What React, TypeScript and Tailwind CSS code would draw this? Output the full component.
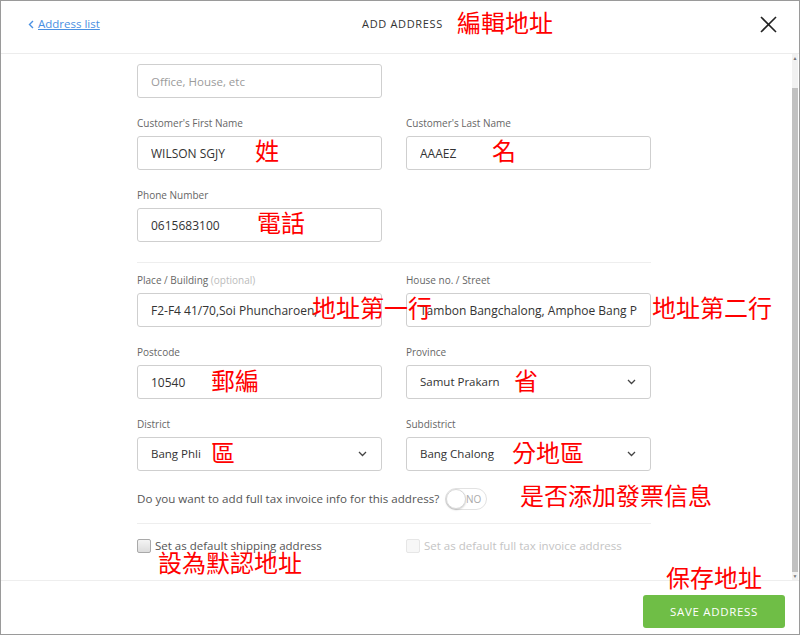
import React from 'react';

const cjk = { fontFamily: '"Noto Sans CJK TC", "Noto Sans CJK SC", sans-serif' };

function Note({ text, x, y }: { text: string; x: number; y: number }) {
  // red annotations drawn over the screenshot
  return (
    <span
      className="absolute text-[24px] leading-none text-[#ff0000] whitespace-nowrap pointer-events-none"
      style={{ ...cjk, left: x, top: y }}
    >
      {text}
    </span>
  );
}

function Label({ children }: { children: React.ReactNode }) {
  return <div className="text-[10px] leading-[14px] text-[#666] mb-[6px] whitespace-nowrap">{children}</div>;
}

function TextField({ label, value, placeholder }: { label: React.ReactNode; value?: string; placeholder?: string }) {
  return (
    <div>
      <Label>{label}</Label>
      <input
        readOnly
        value={value ?? ''}
        placeholder={placeholder}
        className="w-full h-[34px] border border-[#cfcfcf] rounded-[3px] px-[13px] text-[12px] text-[#333] placeholder:text-[#9b9b9b] outline-none bg-white"
      />
    </div>
  );
}

function SelectField({ label, value }: { label: string; value: string }) {
  return (
    <div>
      <Label>{label}</Label>
      <div className="w-full h-[34px] border border-[#cfcfcf] rounded-[3px] pl-[13px] pr-[14px] flex items-center justify-between text-[11.5px] text-[#333] bg-white">
        <span>{value}</span>
        <svg width="9" height="6" viewBox="0 0 9 6" fill="none">
          <polyline points="1,1 4.5,4.5 8,1" stroke="#444" strokeWidth="1.3" />
        </svg>
      </div>
    </div>
  );
}

function Checkbox({ label, disabled }: { label: string; disabled?: boolean }) {
  return (
    <div className="flex items-center gap-[4px]">
      <span
        className={
          disabled
            ? 'w-[14px] h-[14px] rounded-[2px] border border-[#e6e6e6] bg-[#f7f7f7]'
            : 'w-[14px] h-[14px] rounded-[2px] border border-[#a9a9a9] bg-gradient-to-b from-[#f4f4f4] to-[#dcdcdc]'
        }
      />
      <span className={disabled ? 'text-[11.5px] text-[#c4c4c4]' : 'text-[11.5px] text-[#555]'}>{label}</span>
    </div>
  );
}

export default function App() {
  return (
    <div
      className="relative w-[800px] h-[635px] border border-[#9a9a9a] bg-white flex flex-col overflow-hidden"
      style={{ fontFamily: '"Open Sans", Lato, sans-serif' }}
    >
      {/* Header */}
      <div className="h-[53px] shrink-0 border-b border-[#ececec] flex items-center pb-[6px] pl-[27px] pr-[22px]">
        <div className="flex-1 flex items-center gap-[4px] text-[11.5px] text-[#4a90e2]">
          <svg width="6" height="9" viewBox="0 0 6 9" fill="none">
            <polyline points="5,1 1.5,4.5 5,8" stroke="#4a90e2" strokeWidth="1.4" />
          </svg>
          <span className="underline">Address list</span>
        </div>
        <div className="text-[11px] tracking-[0.06em] text-[#333]">ADD ADDRESS</div>
        <div className="flex-1 flex justify-end">
          <svg width="17" height="17" viewBox="0 0 17 17" fill="none">
            <line x1="1" y1="1" x2="16" y2="16" stroke="#222" strokeWidth="1.6" />
            <line x1="16" y1="1" x2="1" y2="16" stroke="#222" strokeWidth="1.6" />
          </svg>
        </div>
      </div>

      {/* Body */}
      <div className="flex-1 flex min-h-0">
        <div className="flex-1 overflow-hidden">
          <div className="ml-[136px] w-[514px] -mt-[14px]">
            <div className="grid grid-cols-2 gap-x-[24px]">
              <div>
                <div className="text-[10px] leading-[14px] text-[#666] mb-[10px] whitespace-nowrap">
                  Address Name <span className="text-[#bbb]">(optional)</span>
                </div>
                <input
                  readOnly
                  placeholder="Office, House, etc"
                  className="w-full h-[34px] border border-[#cfcfcf] rounded-[3px] px-[13px] text-[11.5px] text-[#333] placeholder:text-[#9b9b9b] outline-none bg-white"
                />
              </div>
            </div>
            <div className="grid grid-cols-2 gap-x-[24px] mt-[18px]">
              <TextField label="Customer's First Name" value="WILSON SGJY" />
              <TextField label="Customer's Last Name" value="AAAEZ" />
            </div>
            <div className="grid grid-cols-2 gap-x-[24px] mt-[18px]">
              <TextField label="Phone Number" value="0615683100" />
            </div>
            <div className="h-px bg-[#eeeeee] mt-[20px]" />
            <div className="grid grid-cols-2 gap-x-[24px] mt-[10px]">
              <TextField
                label={
                  <>
                    Place / Building <span className="text-[#bbb]">(optional)</span>
                  </>
                }
                value="F2-F4 41/70,Soi Phuncharoen, "
              />
              <TextField label="House no. / Street" value="Tambon Bangchalong, Amphoe Bang Phli" />
            </div>
            <div className="grid grid-cols-2 gap-x-[24px] mt-[18px]">
              <TextField label="Postcode" value="10540" />
              <SelectField label="Province" value="Samut Prakarn" />
            </div>
            <div className="grid grid-cols-2 gap-x-[24px] mt-[18px]">
              <SelectField label="District" value="Bang Phli" />
              <SelectField label="Subdistrict" value="Bang Chalong" />
            </div>
            <div className="flex items-center gap-[6px] mt-[17px] h-[22px]">
              <span className="text-[11.6px] text-[#555]">Do you want to add full tax invoice info for this address?</span>
              <div className="relative w-[42px] h-[22px] rounded-full border border-[#e2e2e2] bg-white flex items-center justify-end pr-[5px]">
                <span className="absolute left-0 top-0 w-[20px] h-[20px] rounded-full bg-white border border-[#d8d8d8] shadow-[0_1px_2px_rgba(0,0,0,0.2)]" />
                <span className="text-[10px] text-[#aaa]">NO</span>
              </div>
            </div>
            <div className="h-px bg-[#eeeeee] mt-[13px]" />
            <div className="grid grid-cols-2 gap-x-[24px] mt-[13px]">
              <Checkbox label="Set as default shipping address" />
              <Checkbox label="Set as default full tax invoice address" disabled />
            </div>
          </div>
        </div>
        {/* scrollbar */}
        <div className="w-[6px] mr-px bg-[#f1f1f1] flex flex-col items-center">
          <div className="h-[8px] flex items-center text-[5px] leading-none text-[#777]">▲</div>
          <div className="h-[26px]" />
          <div className="flex-1 w-full bg-[#c1c1c1]" />
          <div className="h-[8px] flex items-center text-[5px] leading-none text-[#777]">▼</div>
        </div>
      </div>

      {/* Footer */}
      <div className="h-[54px] shrink-0 border-t border-[#eeeeee] flex justify-end items-start pt-[14px] pr-[14px]">
        <button className="w-[142px] h-[33px] rounded-[3px] bg-[#6fbe46] text-white text-[11.5px] tracking-[0.06em]">
          SAVE ADDRESS
        </button>
      </div>

      <Note text="編輯地址" x={456} y={9} />
      <Note text="姓" x={254} y={137} />
      <Note text="名" x={491} y={137} />
      <Note text="電話" x={256} y={209} />
      <Note text="地址第一行" x={311} y={294} />
      <Note text="地址第二行" x={651} y={294} />
      <Note text="郵編" x={210} y={367} />
      <Note text="省" x={513} y={367} />
      <Note text="區" x={210} y={439} />
      <Note text="分地區" x={511} y={439} />
      <Note text="是否添加發票信息" x={519} y={482} />
      <Note text="設為默認地址" x={157} y={549} />
      <Note text="保存地址" x={665} y={564} />
    </div>
  );
}
